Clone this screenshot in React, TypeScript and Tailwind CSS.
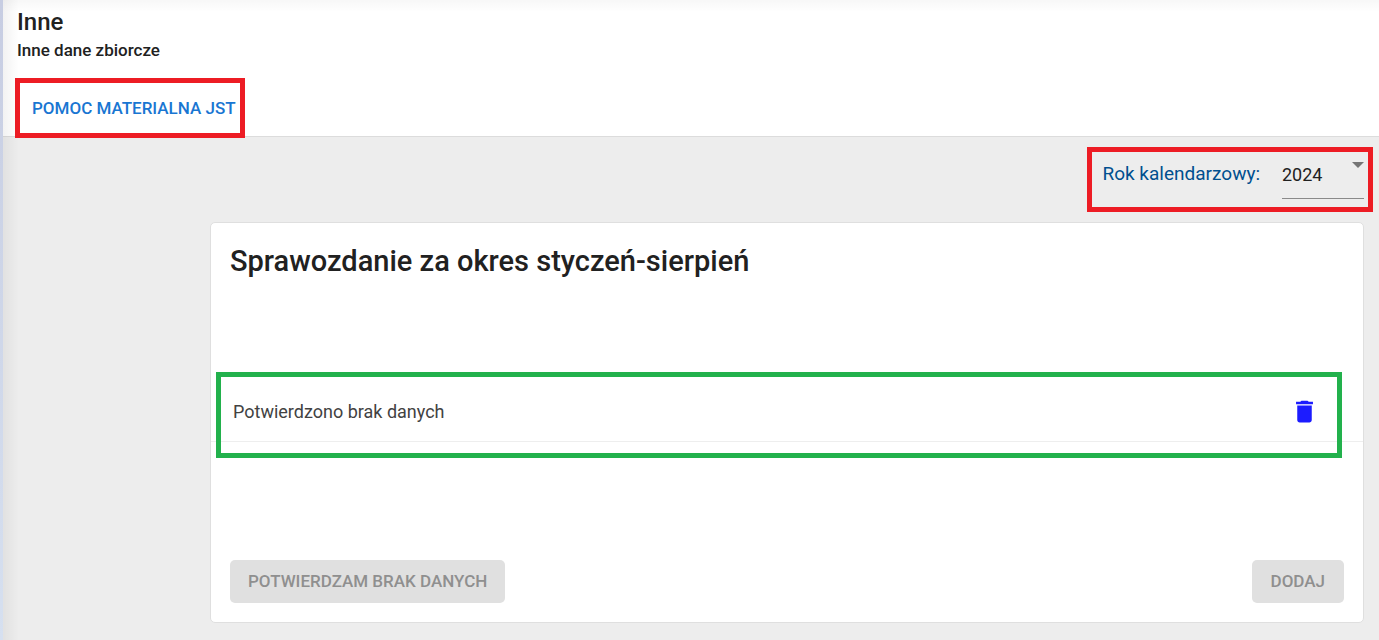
import * as React from "react";

const years = ["2024", "2023", "2022"];

const Header = () => {
  return (
    <header className="border-b border-[#dcdcdc] bg-white pl-3 pt-1">
      <h1 className="pl-[2px] text-2xl font-medium leading-9 text-[#212121]">
        Inne
      </h1>
      <p className="pl-[2px] text-[17px] font-medium leading-5 text-[#212121]">
        Inne dane zbiorcze
      </p>
      <nav className="-mb-[2px] mt-[18px] flex">
        <a
          href="#pomoc-materialna"
          className="flex h-[60px] items-center border-5 border-[#ed1c24] bg-white pl-3 pr-1 pt-px text-[17px] font-medium text-[#1976d2]"
        >
          POMOC MATERIALNA JST
        </a>
      </nav>
    </header>
  );
};

const YearPicker = () => {
  const [year, setYear] = React.useState("2024");

  return (
    <div className="flex h-[65px] border-5 border-[#ed1c24] pl-[10px] pr-1">
      <label
        htmlFor="year"
        className="mr-[22px] pt-2 text-[19px] leading-7 text-[#004f8f]"
      >
        Rok kalendarzowy:
      </label>
      <div className="relative h-[47px] w-[82px] border-b border-[#8a8a8a]">
        <select
          id="year"
          value={year}
          onChange={(e) => setYear(e.target.value)}
          className="h-[46px] w-full appearance-none bg-transparent text-lg text-[#212121] outline-none"
        >
          {years.map((item) => (
            <option key={item} value={item}>
              {item}
            </option>
          ))}
        </select>
        <svg
          className="pointer-events-none absolute right-0 top-[10px] h-[6px] w-3"
          viewBox="0 0 12 6"
          fill="#757575"
        >
          <path d="M0 0h12L6 6z" />
        </svg>
      </div>
    </div>
  );
};

const ReportCard = () => {
  return (
    <section className="rounded-[5px] border border-[#dfdfdf] bg-white">
      <h2 className="px-[19px] pt-[18px] text-[29px] font-medium leading-10 text-[#212121]">
        Sprawozdanie za okres styczeń-sierpień
      </h2>
      <div className="relative mt-[100px] flex h-[61px] items-center justify-between border-b border-[#eeeeee] pl-[22px] pr-11">
        <span className="pt-[2px] text-lg text-[#424242]">
          Potwierdzono brak danych
        </span>
        <button type="button" aria-label="Usuń" className="cursor-pointer">
          <svg width="29" height="29" viewBox="0 0 24 24" fill="#1c1cff">
            <path d="M6 19c0 1.100.900 2 2 2h8c1.100 0 2-.900 2-2V7H6v12zM19 4h-3.500l-1-1h-5l-1 1H5v2h14V4z" />
          </svg>
        </button>
        <div className="pointer-events-none absolute -bottom-[17px] -top-[9px] left-[5px] right-[21px] border-5 border-[#22b14c]" />
      </div>
      <div className="mt-[118px] flex justify-between px-[19px] pb-[19px]">
        <button
          type="button"
          disabled
          className="h-[43px] rounded-[5px] bg-[#e0e0e0] px-[18px] text-[17px] font-medium text-[#8f8f8f]"
        >
          POTWIERDZAM BRAK DANYCH
        </button>
        <button
          type="button"
          disabled
          className="h-[43px] rounded-[5px] bg-[#e0e0e0] px-[19px] text-[17px] font-medium text-[#8f8f8f]"
        >
          DODAJ
        </button>
      </div>
    </section>
  );
};

export default function App() {
  return (
    <div className="flex min-h-screen bg-[#ededed] font-[Roboto,sans-serif]">
      <div className="w-[3px] shrink-0 bg-linear-to-b from-[#c7cde2] to-[#d6e0f0]" />
      <div className="relative min-w-0 flex-1">
        <Header />
        <main className="pb-4">
          <div className="flex justify-end pr-[6px] pt-[10px]">
            <YearPicker />
          </div>
          <div className="ml-[207px] mr-[15px] mt-[10px]">
            <ReportCard />
          </div>
        </main>
        {/* soft shadow cast by the side menu and the top bar */}
        <div className="pointer-events-none absolute inset-y-0 left-0 w-4 bg-linear-to-r from-black/5 to-transparent" />
        <div className="pointer-events-none absolute inset-x-0 top-0 h-3 bg-linear-to-b from-black/3 to-transparent" />
      </div>
    </div>
  );
}
